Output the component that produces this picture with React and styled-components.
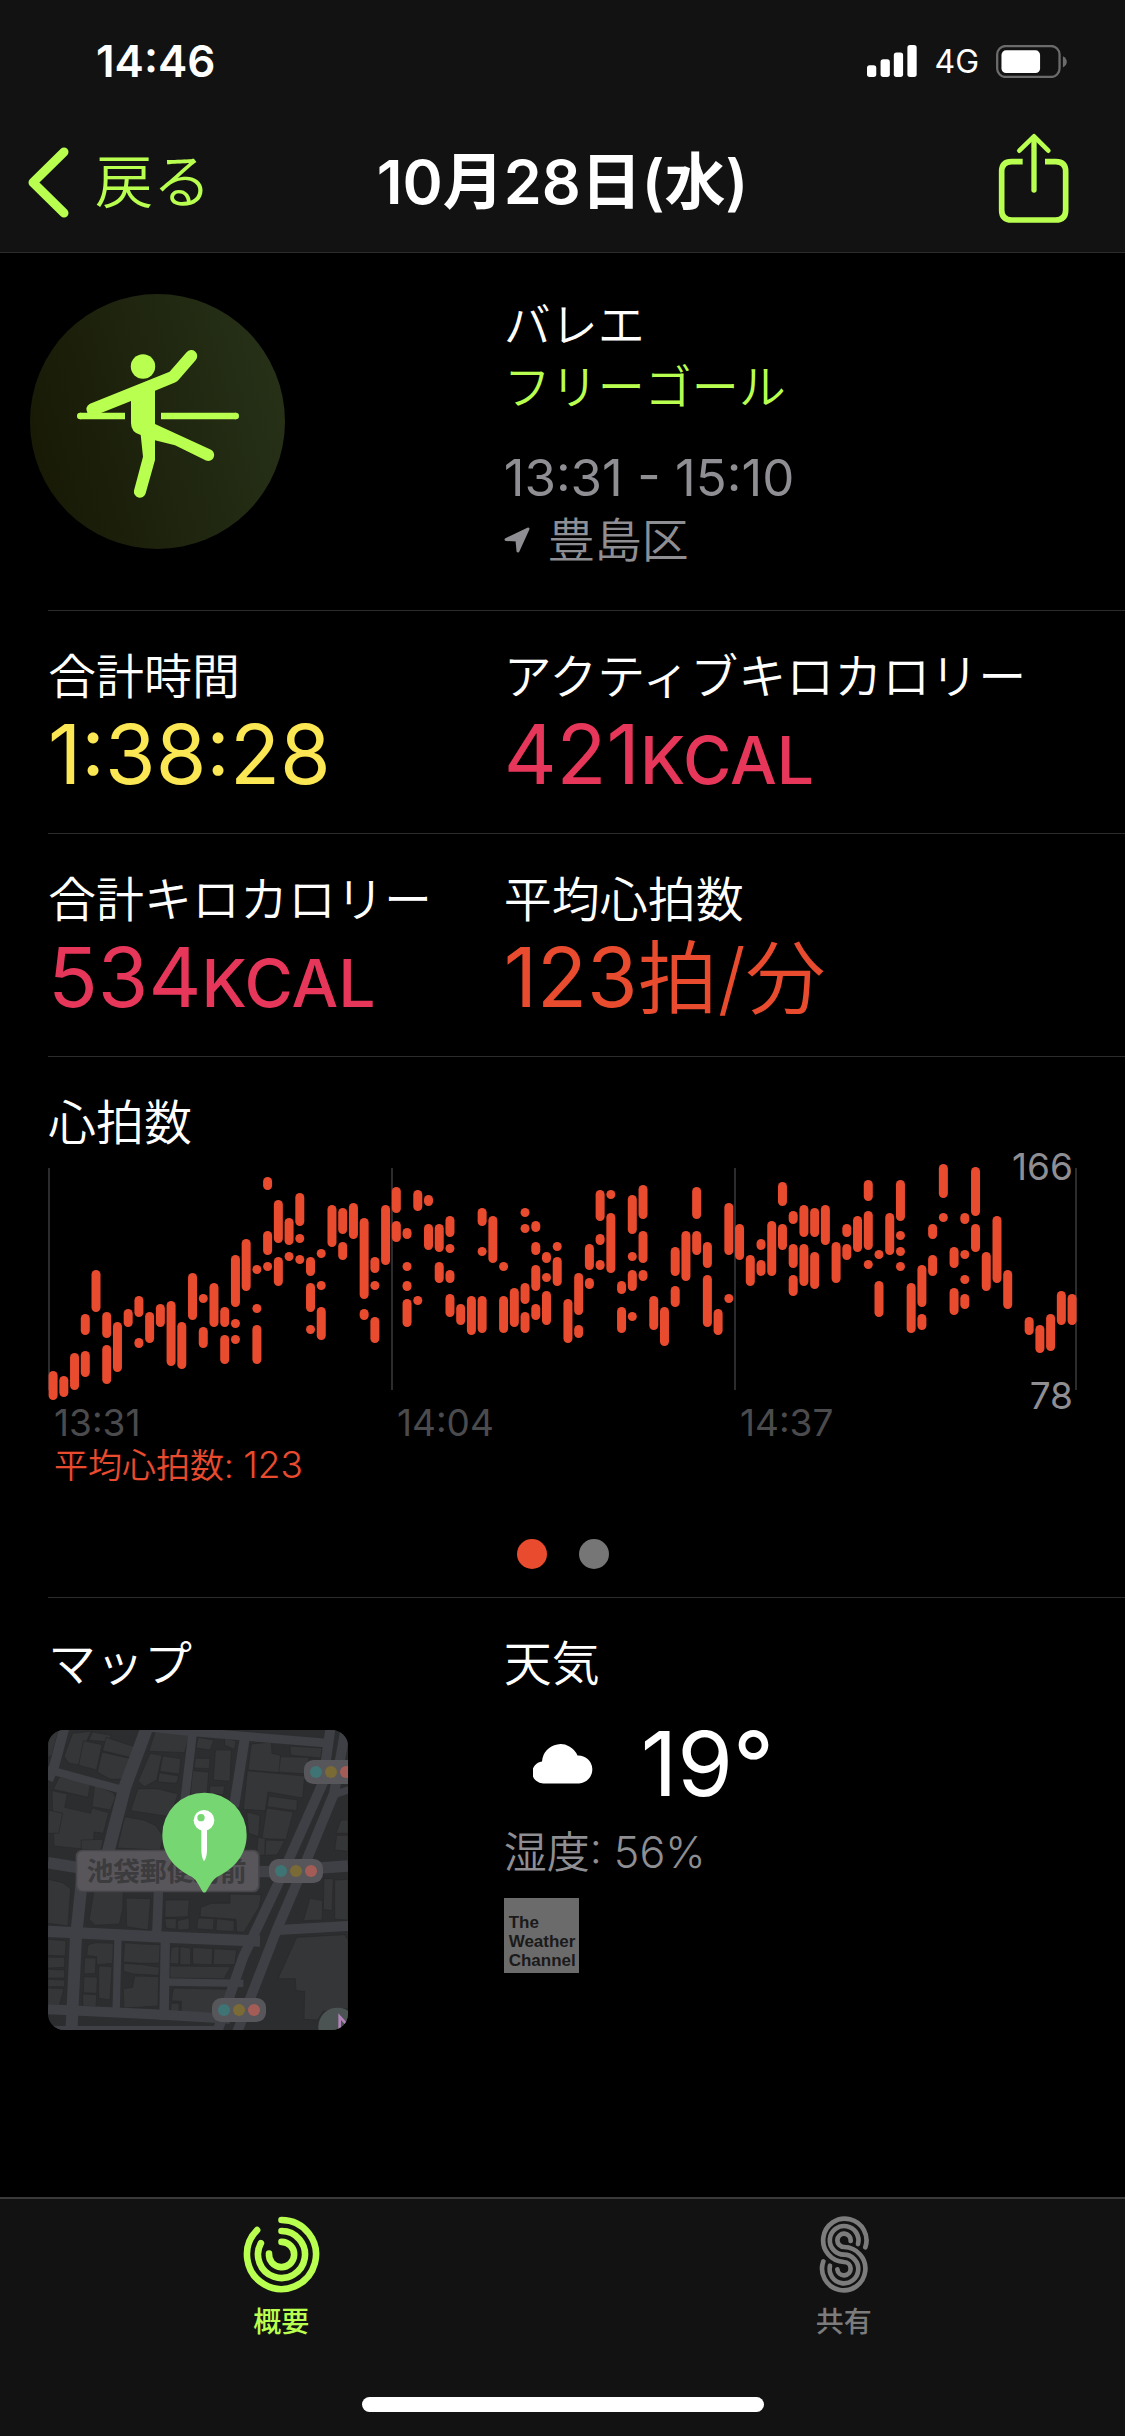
import React from 'react';
import styled, { createGlobalStyle } from 'styled-components';

const colors = {
  bar: '#121212',
  line: '#2c2c2e',
  green: '#b9ff4f',
  yellow: '#fbe653',
  pink: '#e6375a',
  orange: '#e94b2f',
  gray: '#8e8e93',
  dim: '#4b4b4d',
};

// Each column is a list of [top, bottom] ranges in chart units
const heartRate = [
  [[211, 240]],
  [[216, 237]],
  [[193, 230]],
  [[154, 175], [191, 217]],
  [[110, 152]],
  [[152, 178], [185, 224]],
  [[162, 212]],
  [[149, 167]],
  [[136, 157], [178, 188]],
  [[152, 183]],
  [[144, 167]],
  [[141, 206]],
  [[162, 209]],
  [[113, 160]],
  [[134, 143], [167, 188]],
  [[123, 167]],
  [[147, 167], [175, 204]],
  [[95, 147], [159, 168], [175, 184]],
  [[79, 131]],
  [[105, 114], [144, 153], [165, 204]],
  [[17, 30], [71, 95], [102, 111]],
  [[40, 83], [97, 126]],
  [[58, 85], [92, 101]],
  [[33, 66], [74, 83], [95, 104]],
  [[97, 116], [123, 152], [165, 174]],
  [[89, 98], [121, 130], [147, 180]],
  [[45, 87]],
  [[48, 74], [82, 100]],
  [[43, 79]],
  [[58, 139], [149, 160]],
  [[97, 113], [121, 130], [157, 183]],
  [[45, 105]],
  [[27, 53], [61, 82]],
  [[68, 79], [102, 111], [121, 131], [139, 167]],
  [[30, 51], [136, 145]],
  [[35, 46], [64, 90]],
  [[64, 92], [102, 123]],
  [[56, 77], [84, 93], [110, 123], [134, 157]],
  [[144, 165]],
  [[136, 175]],
  [[48, 66], [87, 96], [136, 173]],
  [[56, 103]],
  [[102, 111], [136, 173]],
  [[128, 167]],
  [[48, 57], [64, 73], [123, 144], [152, 173]],
  [[61, 72], [82, 95], [105, 131], [144, 160]],
  [[92, 103], [113, 122], [131, 165]],
  [[82, 91], [97, 126]],
  [[139, 183]],
  [[113, 155], [165, 178]],
  [[84, 110], [118, 129]],
  [[30, 61], [74, 85], [100, 110]],
  [[30, 39], [53, 113]],
  [[121, 134], [147, 173]],
  [[35, 74], [92, 101], [110, 131], [152, 161]],
  [[25, 59], [71, 103], [110, 121]],
  [[136, 170]],
  [[147, 186]],
  [[87, 116], [126, 147]],
  [[71, 121]],
  [[27, 59], [71, 95]],
  [[82, 108], [115, 167]],
  [[149, 175]],
  [[43, 95], [134, 143]],
  [[64, 100]],
  [[95, 126]],
  [[79, 90], [100, 116]],
  [[61, 116]],
  [[22, 46], [64, 90]],
  [[51, 64], [84, 108], [115, 136]],
  [[45, 77], [84, 126]],
  [[48, 77], [92, 129]],
  [[45, 85]],
  [[82, 123]],
  [[64, 77], [84, 100]],
  [[56, 92]],
  [[20, 41], [51, 90], [100, 109]],
  [[90, 99], [121, 157]],
  [[53, 95]],
  [[20, 61], [71, 80], [87, 96], [102, 111]],
  [[123, 173]],
  [[105, 147], [154, 170]],
  [[64, 79], [95, 116]],
  [[4, 38], [53, 62]],
  [[87, 108], [128, 155]],
  [[53, 64], [90, 99], [115, 124], [134, 149]],
  [[7, 56], [64, 92]],
  [[92, 131]],
  [[56, 123]],
  [[110, 149]],
  [],
  [[157, 175]],
  [[165, 193]],
  [[154, 191]],
  [[131, 165]],
  [[134, 165]],
];

const gridLines = [1, 344, 687, 1028];

const roads = [
  { d: 'M104 320 L72 440 L54 480', w: 30 },
  { d: 'M352 320 L285 500 L232 705', w: 38 },
  { d: 'M490 320 L462 560', w: 26 },
  { d: 'M646 345 L612 560', w: 30 },
  { d: 'M340 320 L490 336 L900 370', w: 26 },
  { d: 'M66 452 L285 512', w: 24 },
  { d: 'M54 728 L140 742 L420 752 L720 755 L954 738', w: 34 },
  { d: 'M158 760 L138 950 L124 1240', w: 36 },
  { d: 'M386 800 L380 945', w: 28 },
  { d: 'M406 960 L402 1200', w: 28 },
  { d: 'M264 950 L258 1190', w: 22 },
  { d: 'M54 934 L420 952 L690 963', w: 34 },
  { d: 'M54 1168 L400 1184 L600 1196', w: 30 },
  { d: 'M54 1226 L560 1226', w: 16 },
  { d: 'M410 1086 L640 1090', w: 22 },
  { d: 'M902 320 L878 490 L740 800 L640 1010 L560 1240', w: 30 },
  { d: 'M948 320 L912 520 L830 720 L740 930 L620 1240', w: 30 },
  { d: 'M745 930 L960 918', w: 30 },
  { d: 'M900 528 L960 508', w: 22 },
];

const buildings = [
  '54,330 86,330 66,404 54,414',
  '128,340 184,334 158,388 146,434 116,430 102,408',
  '188,336 244,346 234,366 176,360',
  '228,352 314,380 308,414 218,392',
  '160,362 216,374 200,450 146,436',
  '216,396 302,416 276,478 240,478 202,456',
  '376,334 478,342 464,398 356,394',
  '360,400 396,406 380,480 344,500 324,484',
  '398,408 452,416 448,462 390,454',
  '388,458 446,468 440,490 384,486',
  '324,506 380,506 444,522 420,590 302,572',
  '504,352 552,360 540,390 498,384',
  '556,390 604,390 600,484 550,480',
  '584,354 618,362 614,388 584,376',
  '496,414 540,416 538,446 492,444',
  '488,452 536,456 530,540 480,536',
  '540,498 584,498 580,524 538,520',
  '664,372 724,366 726,400 752,406 748,458 654,450',
  '780,378 876,384 872,414 782,406',
  '752,410 836,412 834,462 746,456',
  '652,452 824,468 818,534 714,516 706,572 640,568',
  '716,528 802,540 800,572 712,560',
  '710,564 790,576 768,658 696,656',
  '650,576 690,586 686,650 656,640',
  '708,660 764,662 742,704 704,706',
  '684,652 706,656 704,706 680,704',
  '88,470 182,490 174,532 70,508',
  '194,496 250,518 256,532 242,570 186,560',
  '66,512 112,522 104,562 182,580 186,564 236,578 220,640 192,636 188,690 152,686 72,678',
  '56,570 98,580 86,640 54,640',
  '154,660 220,658 212,690 154,688',
  '284,590 340,600 376,616 400,650 390,690 262,684',
  '54,778 98,788 122,806 114,918 54,910',
  '194,798 280,806 278,868 268,912 196,916 178,898',
  '288,834 362,836 354,930 290,920',
  '406,840 478,840 474,890 404,892',
  '404,896 440,896 438,928 408,924',
  '442,902 478,894 478,928 444,930',
  '512,862 544,850 600,850 600,822 694,824 688,860 642,936 620,936 618,898 510,890',
  '504,894 552,896 550,930 500,926',
  '560,896 612,902 612,934 558,932',
  '54,958 108,962 106,1008 54,1006',
  '54,1012 104,1012 104,1042 54,1044',
  '54,1048 104,1050 104,1074 54,1074',
  '54,1078 104,1080 104,1100 54,1100',
  '54,1104 102,1106 88,1156 54,1154',
  '174,974 198,968 250,970 248,1030 200,1034 200,1010 170,1006',
  '164,1014 198,1014 196,1060 162,1062',
  '206,1038 246,1040 240,1140 206,1134',
  '162,1070 202,1072 200,1120 160,1118',
  '158,1122 200,1124 198,1160 158,1158',
  '284,968 334,972 390,974 388,1030 336,1030 280,1026',
  '282,1030 338,1034 388,1042 386,1066 312,1062 280,1054',
  '314,1068 386,1070 384,1158 282,1164 280,1106 308,1102',
  '424,982 448,980 446,1032 420,1030',
  '450,980 482,984 482,1034 450,1034',
  '488,982 548,986 546,1034 488,1032',
  '552,986 620,990 614,1034 550,1034',
  '420,1038 602,1040 582,1076 420,1074',
  '430,1104 598,1108 566,1180 454,1178 454,1144 424,1142',
  '424,1150 448,1150 446,1176 422,1174',
  '800,952 944,944 954,960 954,1166 880,1174 862,1200 822,1198 824,1114 798,1112 796,1076 744,1076',
  '840,834 878,842 876,900 820,902',
  '882,776 910,776 906,872 880,868',
  '914,780 954,778 954,900 914,898',
  '932,600 954,600 954,640 918,640',
  '920,646 954,646 954,694 914,690',
];

const signals = [
  [822, 420],
  [717, 717],
  [546, 1134],
];

const GlobalStyle = createGlobalStyle`
  * {
    box-sizing: border-box;
  }

  body {
    margin: 0;
    background: #000;
    color: #fff;
    font-family: Inter, 'Noto Sans CJK JP', sans-serif;
    font-weight: 400;
  }

  h1, h2, p {
    margin: 0;
    font-weight: inherit;
  }

  svg {
    display: block;
    flex-shrink: 0;
  }
`;

const Page = styled.div`
  display: flex;
  flex-direction: column;
  min-height: 100vh;
`;

const Header = styled.header`
  background: ${colors.bar};
  border-bottom: 1px solid ${colors.line};
  padding-bottom: 10px;
`;

const StatusBar = styled.div`
  display: flex;
  align-items: center;
  justify-content: space-between;
  height: 122px;
  padding: 0 58px 0 96px;
  font-size: 44px;
  font-weight: 600;
`;

const StatusIcons = styled.div`
  display: flex;
  align-items: center;
  gap: 17px;
  font-size: 32px;
  font-weight: 400;
`;

const NavBar = styled.div`
  display: grid;
  grid-template-columns: 1fr auto 1fr;
  align-items: center;
  height: 120px;
  padding: 0 55px 0 28px;
`;

const Title = styled.h1`
  font-size: 61px;
  font-weight: 600;
  line-height: 72px;
  padding-left: 27px;
`;

const NavButton = styled.button`
  display: flex;
  align-items: center;
  gap: 26px;
  justify-self: ${(props) => (props.$end ? 'end' : 'start')};
  padding: ${(props) => (props.$end ? '0 0 8px' : '0')};
  border: 0;
  background: none;
  color: ${colors.green};
  font: inherit;
  font-size: 58px;
  font-weight: 350;
  line-height: 72px;
  cursor: pointer;
`;

const Main = styled.main`
  flex: 1;
  padding-left: 48px;
`;

const Section = styled.section`
  padding: 35px 0 ${(props) => (props.$chart ? '28px' : '31px')};
  border-bottom: ${(props) => (props.$last ? '0' : `1px solid ${colors.line}`)};
`;

const Columns = styled.div`
  display: grid;
  grid-template-columns: minmax(0, 11fr) minmax(0, 15fr);
`;

const Hero = styled(Columns)`
  padding: 41px 0 39px;
  border-bottom: 1px solid ${colors.line};
`;

const Badge = styled.div`
  width: 255px;
  height: 255px;
  margin-left: -18px;
  border-radius: 50%;
  background: linear-gradient(75deg, #181a06 10%, #263017 90%);
`;

const Summary = styled.div`
  display: flex;
  flex-direction: column;
`;

const Line = styled.p`
  display: flex;
  align-items: center;
  gap: 18px;
  font-size: ${(props) => (props.$digits ? '51px' : '47px')};
  font-weight: ${(props) => (props.$digits ? 400 : 350)};
  line-height: 62px;
  color: ${(props) => props.$color || '#fff'};
  margin-top: ${(props) => (props.$spaced ? '29px' : '0')};
`;

const Label = styled.h2`
  font-size: 48px;
  font-weight: 350;
  line-height: 62px;
  white-space: nowrap;
`;

const Value = styled.p`
  font-size: 82px;
  line-height: 94px;
  height: 94px;
  color: ${(props) => props.$color};
  white-space: nowrap;
`;

const Unit = styled.span`
  font-size: ${(props) => (props.$kanji ? '80px' : '66px')};
  font-weight: ${(props) => (props.$kanji ? 350 : 500)};
`;

const ChartArea = styled.div`
  position: relative;
  margin: 6px 48px 0 0;

  svg {
    width: 100%;
    height: auto;
  }
`;

const Bound = styled.span`
  position: absolute;
  right: 4px;
  ${(props) => (props.$low ? 'bottom: -15px;' : 'top: -13px;')}
  font-size: 37px;
  line-height: 40px;
  color: ${colors.gray};
`;

const TimeAxis = styled.div`
  display: grid;
  grid-template-columns: repeat(3, 1fr);
  margin: 2px 48px 0 0;
  font-size: 37px;
  line-height: 40px;
  color: ${colors.dim};

  span {
    padding-left: 6px;
  }
`;

const Average = styled.p`
  padding-left: 6px;
  height: 44px;
  font-size: 34px;
  font-weight: 350;
  line-height: 44px;
  color: ${colors.orange};

  span {
    font-size: 37px;
  }
`;

const Pager = styled.div`
  display: flex;
  justify-content: center;
  gap: 32px;
  /* centre on the screen, not on the inset section */
  margin: 52px 48px 0 0;
`;

const Dot = styled.button`
  width: 30px;
  height: 30px;
  padding: 0;
  border: 0;
  border-radius: 50%;
  background: ${(props) => (props.$active ? colors.orange : '#767676')};
`;

const MapTile = styled.div`
  width: 300px;
  height: 300px;
  margin-top: 35px;
  border-radius: 16px;
  overflow: hidden;
`;

const Temperature = styled.p`
  display: flex;
  align-items: center;
  gap: 48px;
  margin-top: 22px;
  padding-left: 29px;
  font-size: 90px;
  line-height: 94px;
`;

const Humidity = styled.p`
  margin-top: 16px;
  font-size: 43px;
  font-weight: 350;
  line-height: 50px;
  color: ${colors.gray};
`;

const Provider = styled.a`
  display: flex;
  flex-direction: column;
  justify-content: flex-end;
  width: 75px;
  height: 75px;
  margin-top: 21px;
  padding: 0 0 3px 5px;
  background: #6b6b6b;
  color: #1a1a1a;
  font-family: 'Liberation Sans', sans-serif;
  font-size: 17px;
  font-weight: 700;
  line-height: 19px;
  text-decoration: none;
`;

const TabBar = styled.footer`
  padding-bottom: 24px;
  border-top: 2px solid #3a3a3a;
  background: ${colors.bar};
`;

const Tabs = styled.nav`
  display: grid;
  grid-template-columns: 1fr 1fr;
`;

const Tab = styled.a`
  display: flex;
  flex-direction: column;
  align-items: center;
  gap: 11px;
  padding-top: 17px;
  color: ${(props) => (props.$active ? colors.green : '#7c7c7c')};
  font-size: 28px;
  font-weight: 500;
  line-height: 36px;
  text-decoration: none;
`;

const HomeIndicator = styled.div`
  width: 402px;
  height: 15px;
  margin: 57px auto 0;
  border-radius: 8px;
  background: #fff;
`;

const SignalIcon = () => (
  <svg width="50" height="32" viewBox="80 45 151 96" fill="#fff">
    <rect x="80" y="106" width="28" height="35" rx="8" />
    <rect x="121" y="88" width="28" height="53" rx="8" />
    <rect x="161" y="67" width="28" height="74" rx="8" />
    <rect x="202" y="45" width="28" height="96" rx="8" />
  </svg>
);

const BatteryIcon = () => (
  <svg width="71" height="33" viewBox="467 43 214 100">
    <rect x="470" y="46" width="189" height="94" rx="26" fill="none" stroke="#6b6b6b" strokeWidth="7" />
    <rect x="483" y="59" width="117" height="69" rx="14" fill="#fff" />
    <path d="M669 77 Q681 83 681 94 Q681 105 669 111 Z" fill="#6b6b6b" />
  </svg>
);

const BackIcon = () => (
  <svg width="41" height="71" viewBox="0 0 41 71" fill="none" stroke="currentColor" strokeWidth="9" strokeLinecap="round" strokeLinejoin="round">
    <path d="M36 5 L5 35.5 L36 66" />
  </svg>
);

const ShareIcon = () => (
  <svg width="72" height="91" viewBox="474 309 216 273" fill="none" stroke="currentColor" strokeWidth="17">
    <path d="M548 395 H515 Q485 395 485 425 V540 Q485 570 515 570 H647 Q677 570 677 540 V425 Q677 395 647 395 H615" />
    <path d="M582 322 V480" strokeWidth="16" strokeLinecap="round" />
    <path d="M538 362 L582 319 L625 362" strokeWidth="14" strokeLinecap="round" strokeLinejoin="round" />
  </svg>
);

const BarreIcon = () => (
  <svg width="255" height="255" viewBox="0 0 255 255" fill={colors.green} stroke={colors.green}>
    <circle cx="113" cy="72.5" r="12.2" stroke="none" />
    <path d="M50 122 H95 M131 122 H206" strokeWidth="6.4" fill="none" />
    <circle cx="50.2" cy="122" r="3.2" stroke="none" />
    <circle cx="205.8" cy="122" r="3.2" stroke="none" />
    <path
      d="M139.6 77.7 L156.6 58.2 A5.9 5.9 0 0 1 165.8 66 L148 86.5 Q147 87.7 145 88.5 L125 96.8 V130 L180.5 155.5 A5.8 5.8 0 0 1 176 166.5 L145 151.3 L125 146.3 V166 L115.6 199.5 A6 6 0 0 1 104 196.5 L113 162.7 L110.7 141 Q101 138.5 101 129 V107 L71 119 H57.5 Q54.5 113 60 109.8 Z"
      stroke="none"
    />
  </svg>
);

const LocationIcon = () => (
  <svg width="26" height="26" viewBox="0 0 26 26" fill="currentColor" stroke="currentColor" strokeWidth="3" strokeLinejoin="round">
    <path d="M2 12.5 L24 2 L14 24 L13 13 Z" />
  </svg>
);

const CloudIcon = () => (
  <svg width="60" height="40" viewBox="0 0 60 40" fill="#fff">
    <path d="M11 39.5 A11 11 0 0 1 9 17.6 A18.5 18.5 0 0 1 44.5 11.4 A14 14 0 0 1 46 39.5 Z" />
  </svg>
);

const RingsIcon = () => (
  <svg width="77" height="77" viewBox="-38.5 -38.5 77 77" fill="none" stroke="currentColor" strokeWidth="6.6" strokeLinecap="round">
    <path d="M0 -34.5 A34.5 34.5 0 1 1 -24.4 -24.4" />
    <path d="M0 -23.5 A23.5 23.5 0 1 1 -20.6 -11.3" />
    <path d="M0 -12.6 A12.6 12.6 0 1 1 -12.5 -1" />
  </svg>
);

const SharingIcon = () => (
  <svg width="50" height="77" viewBox="117 46 150 231" fill="none" stroke="currentColor" strokeWidth="14" strokeLinecap="round">
    <path d="M256 140 A65 65 0 1 0 192 184 A20 20 0 1 1 172 206" />
    <path d="M234 130 A43 43 0 1 0 192 162 A43 43 0 1 1 150 195" />
    <path d="M212 121 A20 20 0 1 0 192 139 A65 65 0 1 1 130 182" />
  </svg>
);

const HeartChart = () => (
  <svg viewBox="0 0 1029 241" role="img" aria-label="心拍数">
    {gridLines.map((x) => (
      <line key={x} x1={x} y1="8" x2={x} y2="230" stroke={colors.line} strokeWidth="2" />
    ))}
    {heartRate.map((ranges, i) =>
      ranges.map(([top, bottom]) => (
        <rect
          key={`${i}-${top}`}
          x={0.6 + i * 10.726}
          y={top}
          width="9"
          height={bottom - top}
          rx="4.5"
          fill={colors.orange}
        />
      ))
    )}
  </svg>
);

const RouteMap = () => (
  <svg width="300" height="300" viewBox="54 330 900 900" role="img" aria-label="マップ">
    <rect x="54" y="330" width="900" height="900" fill="#2c2d2f" />
    {buildings.map((points) => (
      <polygon key={points} points={points} fill="#353638" stroke="#29292b" strokeWidth="2" />
    ))}
    {roads.map(({ d, w }) => (
      <path key={d} d={d} fill="none" stroke="#3f4045" strokeWidth={w} strokeLinejoin="round" />
    ))}
    <rect x="137" y="689" width="552" height="128" rx="20" fill="#47464a" />
    <rect x="142" y="694" width="542" height="118" rx="16" fill="#58565a" />
    <text x="170" y="782" fontSize="80" fontWeight="700" fill="#3c3b3e">池袋郵便局前</text>
    {signals.map(([x, y]) => (
      <g key={x} transform={`translate(${x} ${y})`}>
        <rect width="162" height="72" rx="28" fill="#57565a" />
        <circle cx="36" cy="36" r="18" fill="#3f7475" />
        <circle cx="81" cy="36" r="18" fill="#7a6a35" />
        <circle cx="126" cy="36" r="18" fill="#a35c56" />
      </g>
    ))}
    <circle cx="922" cy="1220" r="57" fill="#4b5353" />
    <path d="M929 1230 V1190 L952 1215" fill="none" stroke="#b083b8" strokeWidth="8" />
    <path
      d="M524 518 A126 126 0 0 1 650 645 C650 705 610 748 562 770 C545 780 538 800 528 815 Q523 820 518 815 C508 800 502 780 485 770 C437 748 397 705 397 645 A126 126 0 0 1 524 518 Z"
      fill="#76d672"
    />
    <circle cx="522" cy="601" r="31" fill="#fff" />
    <circle cx="513" cy="593" r="11" fill="#76d672" />
    <path d="M514 628 H531 V690 Q531 712 522 724 Q514 712 514 690 Z" fill="#fff" />
  </svg>
);

const App = () => {
  return (
    <>
      <GlobalStyle />
      <Page>
        <Header>
          <StatusBar>
            <span>14:46</span>
            <StatusIcons>
              <SignalIcon />
              <span>4G</span>
              <BatteryIcon />
            </StatusIcons>
          </StatusBar>
          <NavBar>
            <NavButton type="button">
              <BackIcon />
              戻る
            </NavButton>
            <Title>10月28日(水)</Title>
            <NavButton type="button" $end aria-label="共有">
              <ShareIcon />
            </NavButton>
          </NavBar>
        </Header>

        <Main>
          <Hero>
            <Badge>
              <BarreIcon />
            </Badge>
            <Summary>
              <Line>バレエ</Line>
              <Line $color={colors.green}>フリーゴール</Line>
              <Line $color={colors.gray} $digits $spaced>13:31 - 15:10</Line>
              <Line $color={colors.gray}>
                <LocationIcon />
                豊島区
              </Line>
            </Summary>
          </Hero>

          <Section>
            <Columns>
              <div>
                <Label>合計時間</Label>
                <Value $color={colors.yellow}>1:38:28</Value>
              </div>
              <div>
                <Label>アクティブキロカロリー</Label>
                <Value $color={colors.pink}>421<Unit>KCAL</Unit></Value>
              </div>
            </Columns>
          </Section>

          <Section>
            <Columns>
              <div>
                <Label>合計キロカロリー</Label>
                <Value $color={colors.pink}>534<Unit>KCAL</Unit></Value>
              </div>
              <div>
                <Label>平均心拍数</Label>
                <Value $color={colors.orange}>123<Unit $kanji>拍/分</Unit></Value>
              </div>
            </Columns>
          </Section>

          <Section $chart>
            <Label>心拍数</Label>
            <ChartArea>
              <HeartChart />
              <Bound>166</Bound>
              <Bound $low>78</Bound>
            </ChartArea>
            <TimeAxis>
              <span>13:31</span>
              <span>14:04</span>
              <span>14:37</span>
            </TimeAxis>
            <Average>平均心拍数: <span>123</span></Average>
            <Pager>
              <Dot type="button" $active aria-label="1" />
              <Dot type="button" aria-label="2" />
            </Pager>
          </Section>

          <Section $last>
            <Columns>
              <div>
                <Label>マップ</Label>
                <MapTile>
                  <RouteMap />
                </MapTile>
              </div>
              <div>
                <Label>天気</Label>
                <Temperature>
                  <CloudIcon />
                  19°
                </Temperature>
                <Humidity>湿度: 56%</Humidity>
                <Provider href="#weather">
                  <span>The</span>
                  <span>Weather</span>
                  <span>Channel</span>
                </Provider>
              </div>
            </Columns>
          </Section>
        </Main>

        <TabBar>
          <Tabs>
            <Tab href="#summary" $active>
              <RingsIcon />
              概要
            </Tab>
            <Tab href="#sharing">
              <SharingIcon />
              共有
            </Tab>
          </Tabs>
          <HomeIndicator />
        </TabBar>
      </Page>
    </>
  );
};

export default App;
